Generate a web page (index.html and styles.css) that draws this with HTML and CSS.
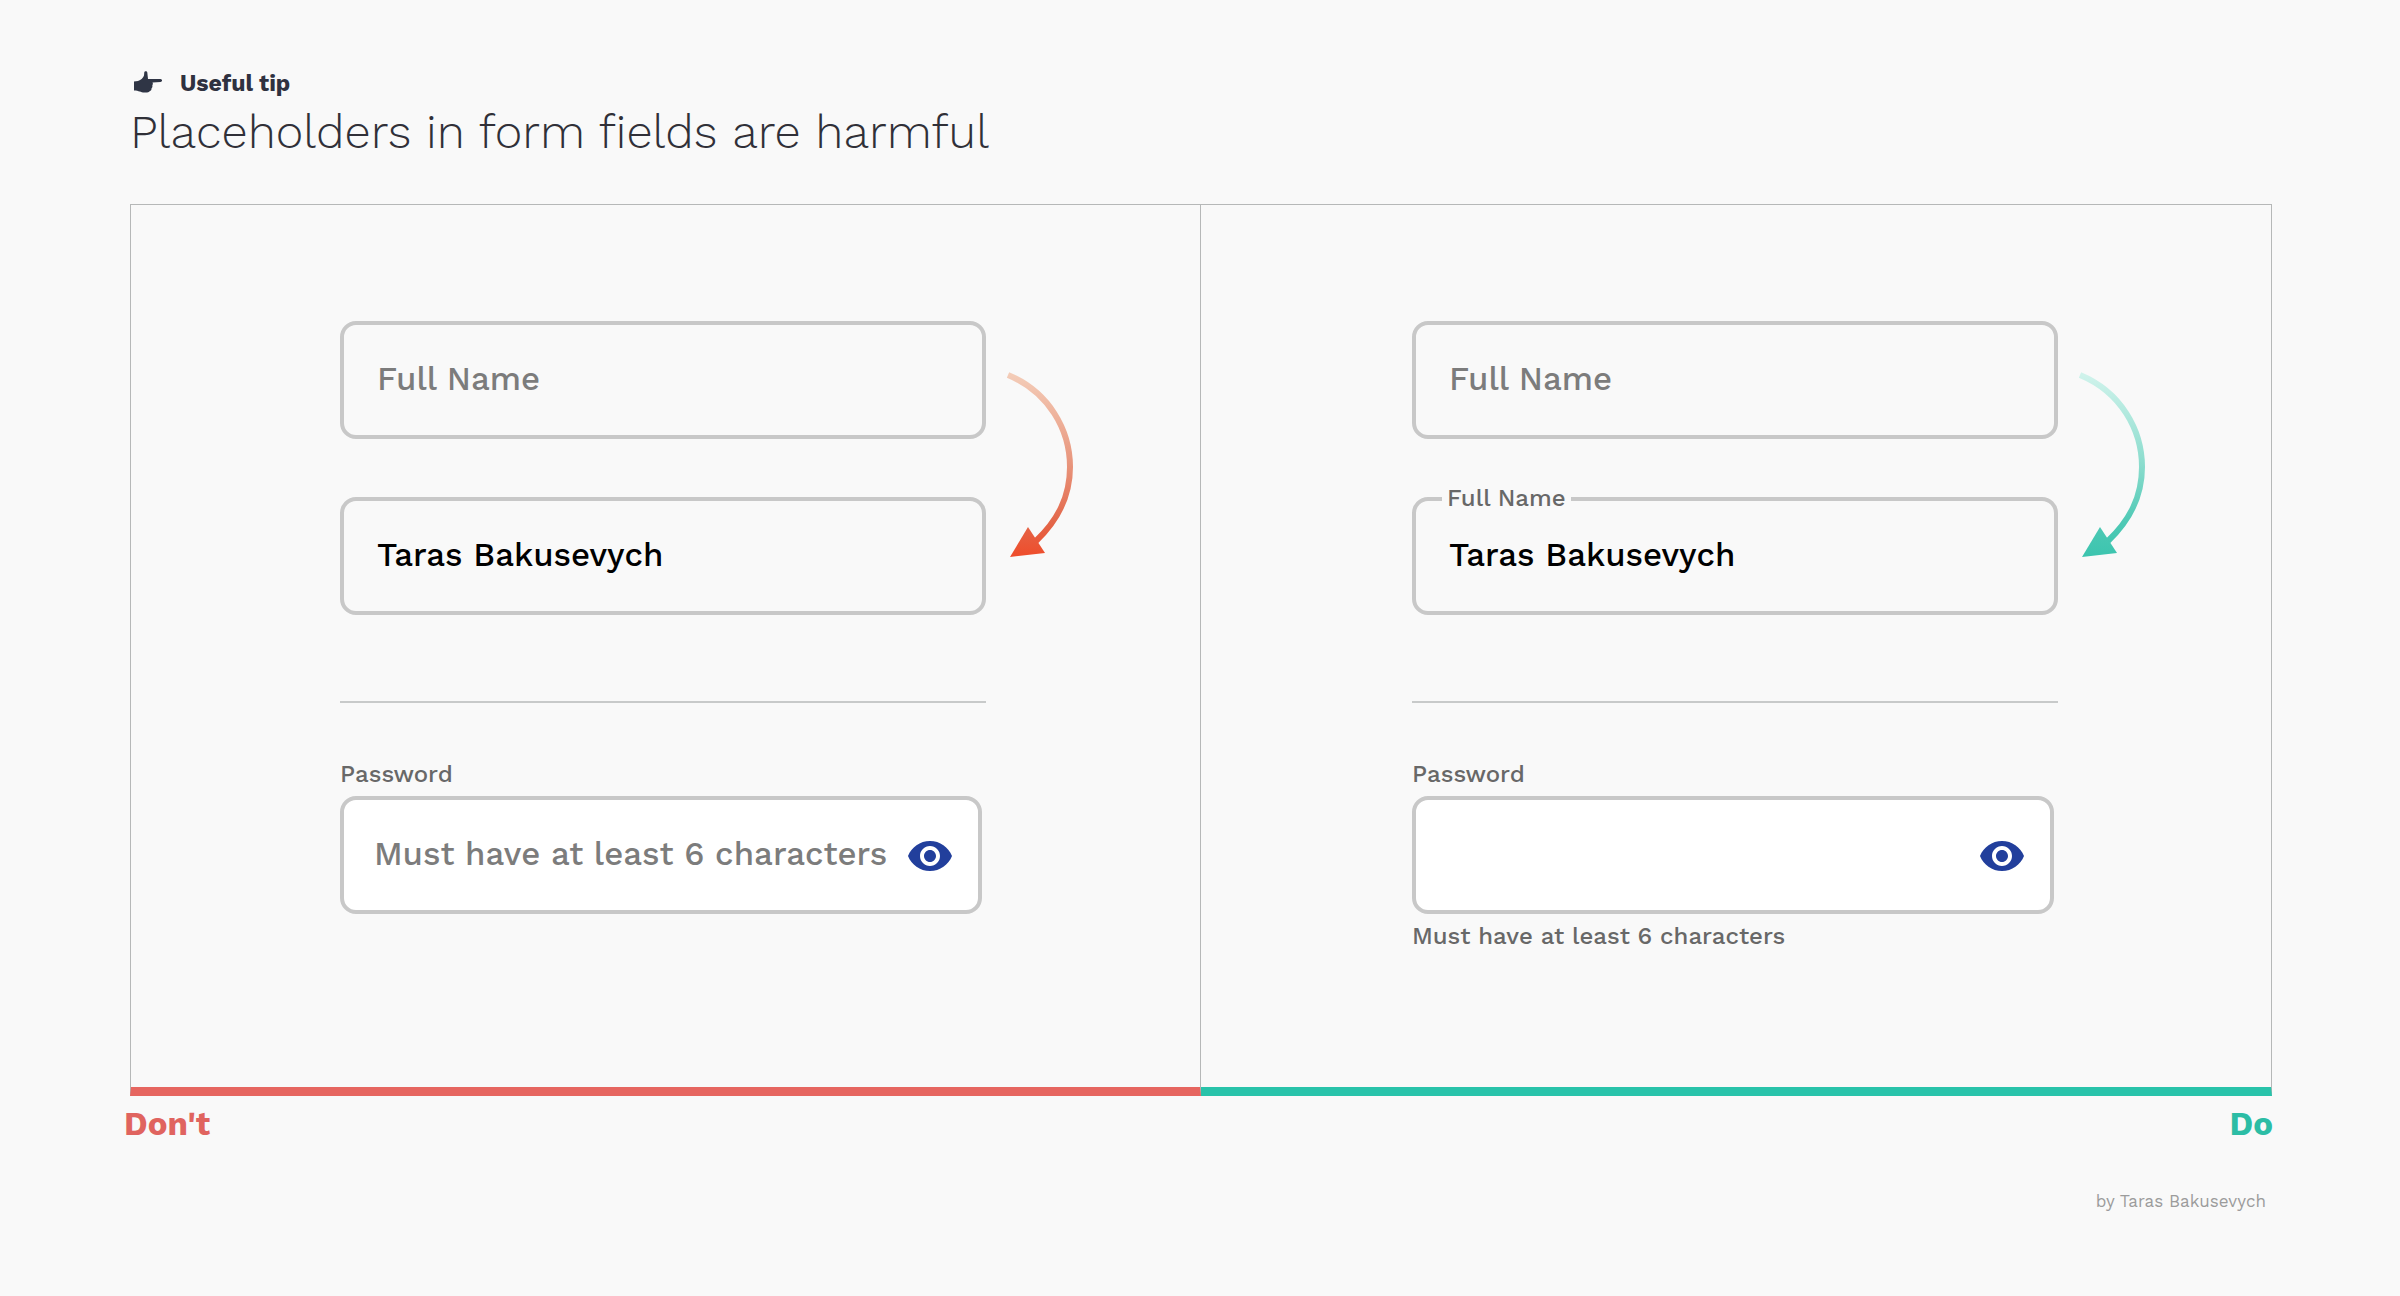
FILE: index.html
```html
<!DOCTYPE html>
<html lang="en">
<head>
<meta charset="utf-8">
<meta name="viewport" content="width=device-width, initial-scale=1">
<title>Placeholders in form fields are harmful</title>
<link rel="stylesheet" href="styles.css">
</head>
<body>
<div class="page">
  <header>
    <p class="eyebrow">
      <svg class="hand" viewBox="0 0 28 22" aria-hidden="true"><path d="M0 10.500L4 10C7 9 9.500 6.500 10 4.500L10.300 1.200C10.600 0 13.200 0 13.300 1.500L14 8L26.500 8C28.600 8.200 28.500 10.700 26.500 11L18.500 11.500C19.200 12.500 18.900 13.700 18.300 14.300C18.700 15.300 18.300 16.600 17.500 17.200C17.700 18.500 17 19.600 15.900 20C15 21.500 12.500 21.700 10.500 21.500C6.500 21.500 5 19.500 0 19.500Z"/></svg>
      Useful tip
    </p>
    <h1 class="title">Placeholders in form fields are harmful</h1>
  </header>

  <main class="board">
    <section class="panel panel-dont" aria-labelledby="dont">
      <div class="names">
        <div class="field"><input class="input" type="text" placeholder="Full Name" aria-label="Full Name"></div>
        <div class="field"><input class="input" type="text" value="Taras Bakusevych" aria-label="Full Name"></div>
      </div>
      <svg class="arrow" viewBox="0 0 70 190" aria-hidden="true">
        <defs><linearGradient id="warm" gradientUnits="userSpaceOnUse" x1="0" y1="0" x2="0" y2="190"><stop offset="0" stop-color="#f4cfbb"/><stop offset=".5" stop-color="#e8947b"/><stop offset=".8" stop-color="#e3674a"/><stop offset="1" stop-color="#f04a28"/></linearGradient></defs>
        <path d="M4 5C45 22 66 60 66 97C66 127 54 150 32 171" fill="none" stroke="url(#warm)" stroke-width="6"/>
        <path d="M6 187L24 157L41 183Z" fill="url(#warm)"/>
      </svg>
      <hr class="rule">
      <div class="password">
        <label class="label" for="pw-dont">Password</label>
        <div class="field">
          <input class="input input-white" id="pw-dont" type="password" placeholder="Must have at least 6 characters">
          <button class="eye" type="button" aria-label="Show password"><svg viewBox="0 0 24 24"><path d="M12 4.500C7 4.500 2.730 7.610 1 12c1.730 4.390 6 7.500 11 7.500s9.270-3.110 11-7.500c-1.730-4.390-6-7.500-11-7.500zM12 17c-2.760 0-5-2.240-5-5s2.240-5 5-5 5 2.240 5 5-2.240 5-5 5zm0-8c-1.660 0-3 1.340-3 3s1.340 3 3 3 3-1.340 3-3-1.340-3-3-3z"/></svg></button>
        </div>
      </div>
    </section>

    <section class="panel panel-do" aria-labelledby="do">
      <div class="names">
        <div class="field"><input class="input" type="text" placeholder="Full Name" aria-label="Full Name"></div>
        <div class="field">
          <input class="input" id="name-do" type="text" value="Taras Bakusevych">
          <label class="label label-float" for="name-do">Full Name</label>
        </div>
      </div>
      <svg class="arrow" viewBox="0 0 70 190" aria-hidden="true">
        <defs><linearGradient id="cool" gradientUnits="userSpaceOnUse" x1="0" y1="0" x2="0" y2="190"><stop offset="0" stop-color="#d3f4ed"/><stop offset=".5" stop-color="#8adccd"/><stop offset=".8" stop-color="#4fc9b5"/><stop offset="1" stop-color="#3ac4ae"/></linearGradient></defs>
        <path d="M4 5C45 22 66 60 66 97C66 127 54 150 32 171" fill="none" stroke="url(#cool)" stroke-width="6"/>
        <path d="M6 187L24 157L41 183Z" fill="url(#cool)"/>
      </svg>
      <hr class="rule">
      <div class="password">
        <label class="label" for="pw-do">Password</label>
        <div class="field">
          <input class="input input-white" id="pw-do" type="password" aria-describedby="pw-hint">
          <button class="eye" type="button" aria-label="Show password"><svg viewBox="0 0 24 24"><path d="M12 4.500C7 4.500 2.730 7.610 1 12c1.730 4.390 6 7.500 11 7.500s9.270-3.110 11-7.500c-1.730-4.390-6-7.500-11-7.500zM12 17c-2.760 0-5-2.240-5-5s2.240-5 5-5 5 2.240 5 5-2.240 5-5 5zm0-8c-1.660 0-3 1.340-3 3s1.340 3 3 3 3-1.340 3-3-1.340-3-3-3z"/></svg></button>
        </div>
        <p class="label" id="pw-hint">Must have at least 6 characters</p>
      </div>
    </section>
  </main>

  <div class="verdicts">
    <h2 class="verdict verdict-dont" id="dont">Don't</h2>
    <h2 class="verdict verdict-do" id="do">Do</h2>
  </div>
  <footer class="credit">by Taras Bakusevych</footer>
</div>
</body>
</html>
```
FILE: styles.css
```css
* {
  box-sizing: border-box;
}

body,
h1,
h2,
p {
  margin: 0;
}

body {
  background: #f9f9f9;
  color: #2f3140;
  font-family: "Work Sans", Inter, "Liberation Sans", sans-serif;
}

.page {
  padding: 68px 128px 68px 130px;
}

.eyebrow {
  display: flex;
  align-items: center;
  gap: 18px;
  padding-left: 4px;
  font-size: 23px;
  font-weight: 700;
  line-height: 32px;
}

.hand {
  width: 28px;
  height: 22px;
  margin-bottom: 4px;
  fill: #2f3545;
}

.title {
  color: #303038;
  font-size: 47px;
  font-weight: 300;
  line-height: 64px;
}

.board {
  display: grid;
  grid-template-columns: 1fr 1fr;
  margin-top: 40px;
}

.panel {
  display: grid;
  grid-template-columns: 209fr 646fr 214fr;
  align-content: start;
  padding: 116px 0 137px;
  border: 1px solid #b6b8b8;
  border-bottom: 9px solid;
}

.panel-dont {
  border-bottom-color: #e66660;
}

.panel-do {
  grid-template-columns: 211fr 646fr 213fr;
  border-left: 0;
  border-bottom-color: #29c3aa;
}

.names {
  grid-column: 2;
  display: grid;
  gap: 58px;
}

.field {
  position: relative;
  display: flex;
}

.input {
  width: 100%;
  height: 118px;
  padding: 0 33px 4px;
  border: 4px solid #c8c8c8;
  border-radius: 16px;
  background: transparent;
  color: #000;
  font: inherit;
  font-size: 33px;
  font-weight: 500;
}

.input::placeholder {
  color: #7c7c7c;
  opacity: 1;
}

.input-white {
  padding: 0 88px 4px 30px;
  background: #fff;
}

.arrow {
  grid-column: 3;
  width: 70px;
  height: 190px;
  margin: 49px 0 0 18px;
}

.rule {
  grid-column: 2;
  width: 100%;
  height: 2px;
  margin: 86px 0 57px;
  border: 0;
  background: #c8caca;
}

.password {
  grid-column: 2;
  display: grid;
  gap: 8px;
  padding-right: 4px;
}

.label {
  color: #686868;
  font-size: 24px;
  font-weight: 500;
  line-height: 28px;
}

.label-float {
  position: absolute;
  top: -13px;
  left: 30px;
  padding: 0 5px;
  background: #f9f9f9;
}

.eye {
  position: absolute;
  top: 36px;
  right: 28px;
  width: 48px;
  height: 48px;
  padding: 0;
  border: 0;
  background: none;
}

.eye svg {
  display: block;
  fill: #223f9c;
}

.verdicts {
  display: flex;
  justify-content: space-between;
  margin: 8px -1px 0 -6px;
}

.verdict {
  font-size: 33px;
  font-weight: 700;
  line-height: 40px;
}

.verdict-dont {
  color: #e0645f;
}

.verdict-do {
  color: #2cbda5;
}

.credit {
  margin-top: 45px;
  padding-right: 6px;
  color: #9c9c9c;
  font-size: 17px;
  line-height: 24px;
  text-align: right;
}
```
